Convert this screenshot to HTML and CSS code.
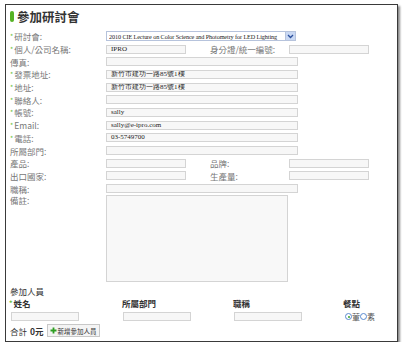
FILE: index.html
```html
<!DOCTYPE html>
<html>
	<head>
		<meta charset="UTF-8">
		<title>參加研討會</title>
		<link rel="stylesheet" href="styles.css">
	</head>
	<body>
		<div class="box">
			<h2 class="title"><span class="mark"></span>參加研討會</h2>

			<!--基本資料-->
			<div class="form">
				<div class="row">
					<label class="lbl"><i>*</i>研討會:</label>
					<div class="sel">
						<span>2010 CIE Lecture on Color Science and Photometry for LED Lighting</span>
						<b class="arrow"><svg width="7" height="5" viewBox="0 0 7 5"><path d="M1 1 L3.5 3.5 L6 1" fill="none" stroke="#2a4f9c" stroke-width="1.3"/></svg></b>
					</div>
				</div>
				<div class="row">
					<label class="lbl"><i>*</i>個人/公司名稱:</label>
					<div class="ipt half">IPRO</div>
					<label class="lbl2">身分證/統一編號:</label>
					<div class="ipt half"></div>
				</div>
				<div class="row">
					<label class="lbl">傳真:</label>
					<div class="ipt wide"></div>
				</div>
				<div class="row">
					<label class="lbl"><i>*</i>發票地址:</label>
					<div class="ipt wide">新竹市建功一路85號1樓</div>
				</div>
				<div class="row">
					<label class="lbl"><i>*</i>地址:</label>
					<div class="ipt wide">新竹市建功一路85號1樓</div>
				</div>
				<div class="row">
					<label class="lbl"><i>*</i>聯絡人:</label>
					<div class="ipt wide"></div>
				</div>
				<div class="row">
					<label class="lbl"><i>*</i>帳號:</label>
					<div class="ipt wide">sally</div>
				</div>
				<div class="row">
					<label class="lbl"><i>*</i>Email:</label>
					<div class="ipt wide">sally@e-ipro.com</div>
				</div>
				<div class="row">
					<label class="lbl"><i>*</i>電話:</label>
					<div class="ipt wide">03-5749700</div>
				</div>
				<div class="row">
					<label class="lbl">所屬部門:</label>
					<div class="ipt wide"></div>
				</div>
				<div class="row">
					<label class="lbl">產品:</label>
					<div class="ipt half"></div>
					<label class="lbl2">品牌:</label>
					<div class="ipt half"></div>
				</div>
				<div class="row">
					<label class="lbl">出口國家:</label>
					<div class="ipt half"></div>
					<label class="lbl2">生產量:</label>
					<div class="ipt half"></div>
				</div>
				<div class="row">
					<label class="lbl">職稱:</label>
					<div class="ipt wide"></div>
				</div>
				<div class="row memo">
					<label class="lbl">備註:</label>
					<div class="area"></div>
				</div>
			</div>

			<!--參加人員-->
			<div class="people">
				<div class="ptitle">參加人員</div>
				<div class="pgrid">
					<div class="ph"><i>*</i>姓名</div>
					<div class="ph">所屬部門</div>
					<div class="ph">職稱</div>
					<div class="ph">餐點</div>
					<div class="pipt"></div>
					<div class="pipt"></div>
					<div class="pipt"></div>
					<div class="food">
						<span class="radio on"></span><span>葷</span><span class="radio"></span><span>素</span>
					</div>
				</div>
				<div class="total">
					<span>合計</span>
					<span class="sum">0元</span>
					<span class="btn"><svg width="7" height="7" viewBox="0 0 7 7"><path d="M3.5 0.5 V6.5 M0.5 3.5 H6.5" stroke="#2e9e22" stroke-width="1.8"/></svg>新增參加人員</span>
				</div>
			</div>
		</div>
	</body>
</html>
```

FILE: styles.css
```css
*{
	margin: 0;
	padding: 0;
}

body{
	font-family: "Noto Sans CJK TC", "Noto Sans", sans-serif;
	background-color: #fff;
}

.box{
	width: 387px;
	height: 331px;
	margin: 4px 0 0 5px;
	padding: 5px 0 0 4px;
	border: 1px solid #3a3a3a;
	box-shadow: 2px 2px 2px #8a8a8a;
}

.title{
	display: flex;
	align-items: center;
	height: 13px;
	font-size: 12.5px;
	line-height: 13px;
	color: #333;
}

.mark{
	width: 4px;
	height: 11px;
	margin-right: 3px;
	border-radius: 2px;
	background-color: #55b324;
}

.form{
	margin-top: 7px;
	display: grid;
	grid-auto-rows: 12.7px;
}

.row{
	display: flex;
	align-items: center;
}

.lbl{
	width: 96px;
	font-size: 8.5px;
	color: #777;
	white-space: nowrap;
}

.lbl i, .ph i{
	font-style: normal;
	color: #6cbf3a;
	font-size: 7px;
	margin-right: 1px;
	vertical-align: 1px;
}

.lbl2{
	width: 79px;
	margin-left: 24px;
	font-size: 8.5px;
	color: #777;
	white-space: nowrap;
}

.ipt{
	box-sizing: border-box;
	height: 9px;
	border: 1px solid #d4d4d4;
	background-color: #f7f7f7;
	font-family: "Liberation Serif", serif;
	font-size: 7px;
	line-height: 7px;
	padding-left: 4px;
	color: #222;
	overflow: hidden;
	white-space: nowrap;
}

.half{
	width: 80px;
}

.wide{
	width: 192px;
}

.sel{
	box-sizing: border-box;
	width: 190px;
	height: 10px;
	display: flex;
	align-items: center;
	border: 1px solid #b6c3dc;
	background-color: #fff;
	font-family: "Liberation Serif", serif;
	font-size: 6.2px;
	letter-spacing: -0.1px;
	color: #222;
	padding-left: 2px;
	white-space: nowrap;
	overflow: hidden;
}

.sel span{
	flex: 1;
	overflow: hidden;
}

.arrow{
	width: 9px;
	height: 8px;
	display: flex;
	align-items: center;
	justify-content: center;
	background-color: #c9d8f3;
	border-left: 1px solid #b6c3dc;
}

.memo{
	height: 87px;
	align-items: flex-start;
	margin-top: -0.4px;
}

.memo .lbl{
	line-height: 12px;
	margin-top: -1px;
}

.area{
	box-sizing: border-box;
	width: 182px;
	height: 87px;
	border: 1px solid #d4d4d4;
	background-color: #f8f8f8;
}

.people{
	margin-top: 77px;
}

.ptitle{
	font-size: 8.5px;
	line-height: 12px;
	color: #333;
}

.pgrid{
	display: grid;
	grid-template-columns: 112px 111px 110px 40px;
	grid-template-rows: 13px 14px;
	align-items: center;
}

.ph{
	font-size: 8.5px;
	font-weight: bold;
	color: #333;
}

.ph:first-child{
	margin-left: -1px;
}

.pipt{
	box-sizing: border-box;
	width: 68px;
	height: 9px;
	margin-left: 1px;
	border: 1px solid #d4d4d4;
	background-color: #f7f7f7;
}

.food{
	display: flex;
	align-items: center;
	font-size: 8px;
	color: #555;
	margin-left: 2px;
}

.radio{
	box-sizing: border-box;
	width: 7px;
	height: 7px;
	border: 1px solid #5a8ad0;
	border-radius: 50%;
	background-color: #fff;
	position: relative;
}

.radio.on::after{
	content: "";
	position: absolute;
	left: 1.5px;
	top: 1.5px;
	width: 2px;
	height: 2px;
	border-radius: 50%;
	background-color: #3aa62a;
}

.total{
	display: flex;
	align-items: center;
	gap: 3px;
	height: 12px;
	margin-top: 1px;
	font-size: 8.5px;
	color: #333;
}

.sum{
	font-weight: bold;
}

.btn{
	display: flex;
	align-items: center;
	height: 11px;
	padding: 0 2px;
	border: 1px solid #c8c8c8;
	background-color: #f4f4f4;
	font-size: 6.5px;
	color: #333;
}

.btn svg{
	margin-right: 1px;
}
```
